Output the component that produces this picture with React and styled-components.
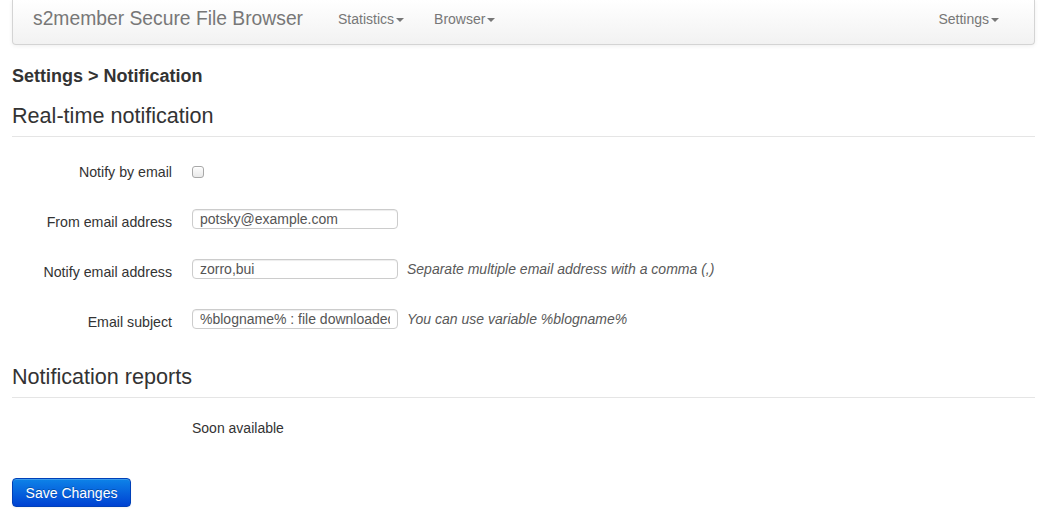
import React from "react";
import styled, { createGlobalStyle } from "styled-components";

const GlobalStyle = createGlobalStyle`
  html, body {
    margin: 0;
    padding: 0;
    background: #fff;
  }
  body {
    font-family: "Liberation Sans", Arial, Helvetica, sans-serif;
    font-size: 14px;
    line-height: 20px;
    color: #333;
  }
`;

const Page = styled.div`
  padding: 0 14px 20px 12px;
`;

const Navbar = styled.div`
  display: flex;
  align-items: flex-start;
  height: 44px;
  padding: 0 20px;
  background: linear-gradient(to bottom, #ffffff, #f2f2f2);
  border: 1px solid #d4d4d4;
  border-top: none;
  border-radius: 0 0 4px 4px;
  box-shadow: 0 1px 4px rgba(0, 0, 0, 0.065);
`;

const Brand = styled.a`
  display: block;
  padding: 9px 20px 0;
  margin-left: -20px;
  font-size: 19.3px;
  line-height: 20px;
  color: #777;
  text-decoration: none;
`;

const Nav = styled.ul`
  display: flex;
  list-style: none;
  margin: 0 0 0 ${(p) => (p.$right ? "auto" : "0")};
  padding: 0;
`;

const NavLink = styled.a`
  display: flex;
  align-items: center;
  padding: 9px 15px 0;
  font-size: 14px;
  line-height: 20px;
  color: #777;
  text-decoration: none;
`;

const Caret = styled.span`
  display: inline-block;
  width: 0;
  height: 0;
  margin-left: 2px;
  margin-top: 1px;
  border-top: 4px solid #777;
  border-left: 4px solid transparent;
  border-right: 4px solid transparent;
`;

const Crumb = styled.h4`
  margin: 21px 0 10px;
  font-size: 18px;
  line-height: 20px;
  font-weight: bold;
  color: #333;
`;

const Legend = styled.div`
  font-size: 21.6px;
  line-height: 40px;
  color: #333;
  border-bottom: 1px solid #e5e5e5;
  margin-bottom: 20px;
`;

const Group = styled.div`
  display: flex;
  align-items: flex-start;
  margin-bottom: 20px;
  min-height: 30px;
`;

const Label = styled.label`
  width: 160px;
  flex: none;
  padding-top: 5px;
  text-align: right;
  font-size: 14.2px;
  line-height: 20px;
  color: #333;
`;

const Controls = styled.div`
  display: flex;
  align-items: center;
  margin-left: 20px;
  padding-top: ${(p) => p.$pad || 0}px;
`;

const Check = styled.input`
  appearance: none;
  width: 12px;
  height: 12px;
  margin: 4px 0 0 0;
  border: 1px solid #a8a8a8;
  border-radius: 3px;
  background: linear-gradient(to bottom, #fdfdfd, #e9e9e9);
  box-shadow: inset 0 1px 0 #fff;
`;

const TextInput = styled.input`
  box-sizing: border-box;
  width: 206px;
  height: 20px;
  margin-top: 2px;
  padding: 0 7px;
  border: 1px solid #ccc;
  border-radius: 4px;
  font-family: "Liberation Sans", Arial, sans-serif;
  font-size: 14px;
  color: #555;
  background: #fff;
  box-shadow: inset 0 1px 1px rgba(0, 0, 0, 0.075);
  outline: none;
`;

const Help = styled.span`
  margin-left: 9px;
  margin-top: 2px;
  font-style: italic;
  font-size: 14px;
  color: #595959;
`;

const Note = styled.p`
  margin: 0 0 40px 180px;
  font-size: 14px;
  line-height: 20px;
`;

const PrimaryButton = styled.button`
  box-sizing: border-box;
  width: 119px;
  height: 29px;
  padding: 4px 12px;
  font-family: "Liberation Sans", Arial, sans-serif;
  font-size: 14px;
  line-height: 20px;
  color: #fff;
  text-shadow: 0 -1px 0 rgba(0, 0, 0, 0.25);
  background: linear-gradient(to bottom, #0d83e8, #0042d2);
  border: 1px solid #0040b8;
  border-radius: 4px;
  box-shadow: inset 0 1px 0 rgba(255, 255, 255, 0.2), 0 1px 2px rgba(0, 0, 0, 0.05);
`;

const Field = ({ label, children, pad }) => (
  <Group>
    <Label>{label}</Label>
    <Controls $pad={pad}>{children}</Controls>
  </Group>
);

export default function App() {
  return (
    <>
      <GlobalStyle />
      <Page>
        <Navbar>
          <Brand href="#">s2member Secure File Browser</Brand>
          <Nav>
            <li>
              <NavLink href="#">
                Statistics<Caret />
              </NavLink>
            </li>
            <li>
              <NavLink href="#">
                Browser<Caret />
              </NavLink>
            </li>
          </Nav>
          <Nav $right>
            <li>
              <NavLink href="#">
                Settings<Caret />
              </NavLink>
            </li>
          </Nav>
        </Navbar>

        <Crumb>Settings &gt; Notification</Crumb>

        <form onSubmit={(e) => e.preventDefault()}>
          <Legend>Real-time notification</Legend>
          <Field label="Notify by email" pad={5}>
            <Check type="checkbox" />
          </Field>
          <Field label="From email address">
            <TextInput defaultValue="potsky@example.com" />
          </Field>
          <Field label="Notify email address">
            <TextInput defaultValue="zorro,bui" />
            <Help>Separate multiple email address with a comma (,)</Help>
          </Field>
          <Field label="Email subject">
            <TextInput defaultValue="%blogname% : file downloaded" />
            <Help>You can use variable %blogname%</Help>
          </Field>

          <Legend>Notification reports</Legend>
          <Note>Soon available</Note>

          <PrimaryButton type="submit">Save Changes</PrimaryButton>
        </form>
      </Page>
    </>
  );
}
